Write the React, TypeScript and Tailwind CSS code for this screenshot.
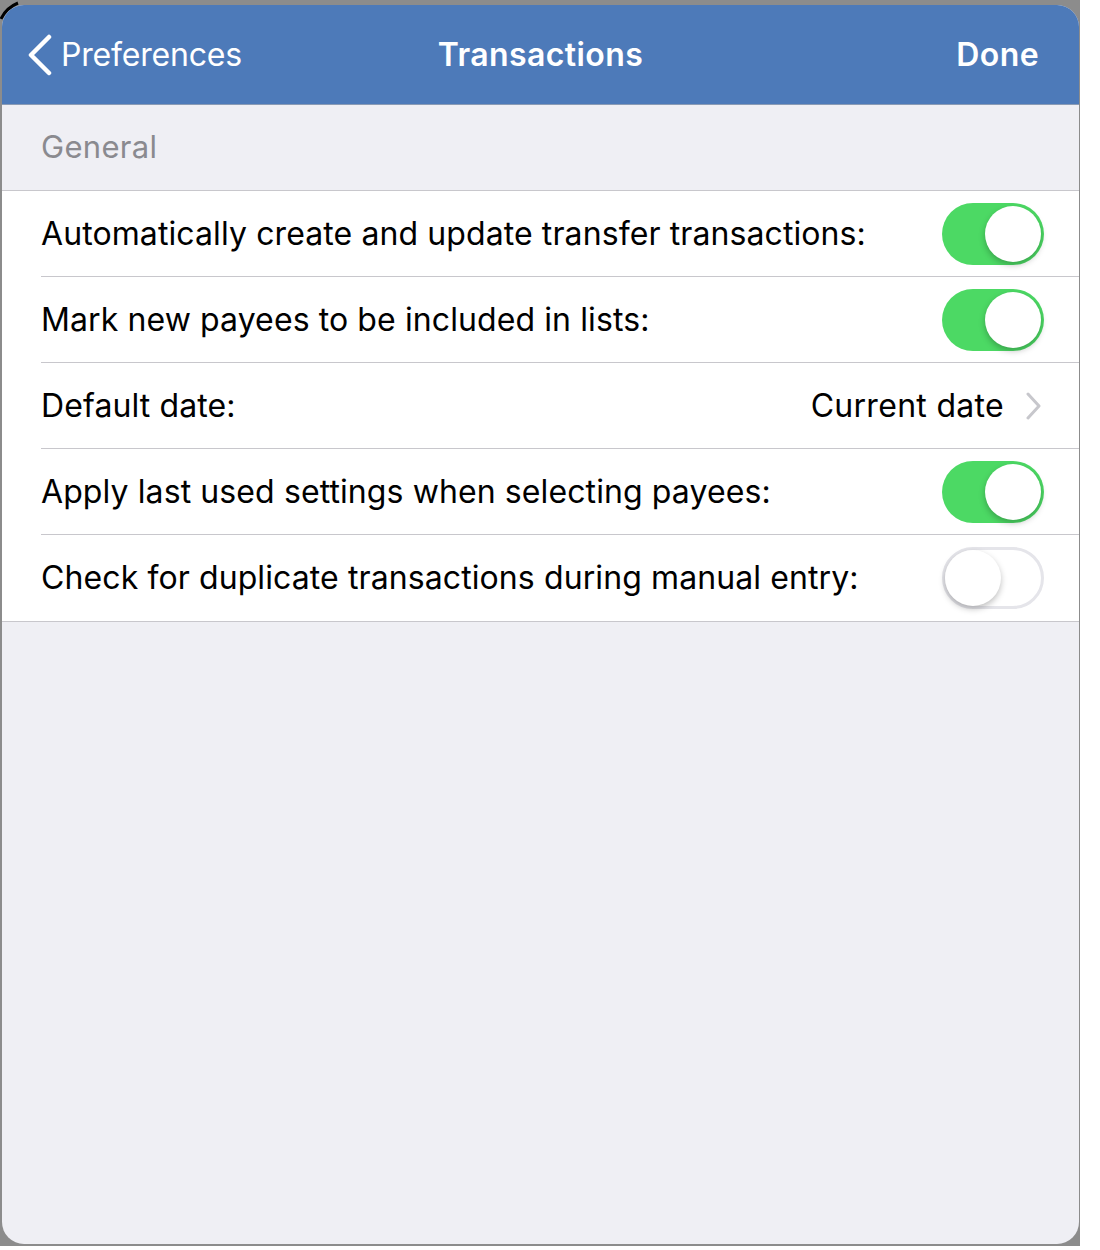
type Row =
  | { kind: "toggle"; label: string; on: boolean }
  | { kind: "link"; label: string; value: string }

const rows: Row[] = [
  { kind: "toggle", label: "Automatically create and update transfer transactions:", on: true },
  { kind: "toggle", label: "Mark new payees to be included in lists:", on: true },
  { kind: "link", label: "Default date:", value: "Current date" },
  { kind: "toggle", label: "Apply last used settings when selecting payees:", on: true },
  { kind: "toggle", label: "Check for duplicate transactions during manual entry:", on: false },
]

function Toggle({ on }: { on: boolean }) {
  return (
    <div
      className={`relative w-[102px] h-[62px] rounded-full ${
        on ? "bg-[#4cd964]" : "bg-white border-[3px] border-[#e5e5ea]"
      }`}
    >
      <div
        className={`absolute w-[56px] h-[56px] rounded-full bg-white shadow-[0_3px_6px_rgba(0,0,0,0.25)] ${
          on ? "top-[3px] right-[3px]" : "top-[0px] left-[0px]"
        }`}
      />
    </div>
  )
}

export default function App() {
  return (
    <div
      className="w-[1080px] h-[1246px] bg-[#8c8c8c] pt-[5px] pl-[2px] pr-[1px] pb-[2px] relative"
      style={{ fontFamily: "Inter, 'Liberation Sans', sans-serif" }}
    >
      <svg className="absolute left-0 top-0" width="24" height="24" viewBox="0 0 24 24">
        <path d="M1 19 Q6 8 18 3" stroke="#000" strokeWidth="3" fill="none" />
      </svg>
      <div className="h-full rounded-[22px] overflow-hidden bg-[#efeff4] flex flex-col">
        {/* nav bar */}
        <header className="h-[100px] bg-[#4d7ab9] border-b border-[#8a9bb5] flex items-center pl-[25px] text-white relative">
          <div className="flex items-center gap-[8px]">
            <svg width="26" height="42" viewBox="0 0 26 42">
              <polyline
                points="22,3 4,21 22,39"
                stroke="#fff"
                strokeWidth="4.5"
                strokeLinecap="round"
                strokeLinejoin="round"
                fill="none"
              />
            </svg>
            <span className="text-[32px] tracking-[-0.2px]">Preferences</span>
          </div>
          <span className="absolute left-0 right-0 text-center text-[32px] font-semibold tracking-[0.4px] pointer-events-none">
            Transactions
          </span>
          <span className="ml-auto mr-[40px] text-[32px] font-semibold tracking-[0.4px]">Done</span>
        </header>

        <div className="h-[85px] flex items-center px-[39px] text-[31px] tracking-[0.3px] text-[#8a8a8f]">
          General
        </div>

        <div className="bg-white border-y border-[#c8c7cc]">
          {rows.map((row, i) => (
            <div key={i} className="pl-[39px]">
              <div
                className={`h-[86px] flex items-center pr-[35px] ${
                  i < rows.length - 1 ? "border-b border-[#c8c7cc]" : ""
                }`}
              >
                <span className="text-[32px] text-black tracking-[0.1px]">{row.label}</span>
                <div className="ml-auto flex items-center">
                  {row.kind === "toggle" ? (
                    <Toggle on={row.on} />
                  ) : (
                    <div className="flex items-center gap-[22px] mr-[3px]">
                      <span className="text-[32px] text-black tracking-[0.3px]">{row.value}</span>
                      <svg width="15" height="28" viewBox="0 0 15 28">
                        <polyline
                          points="2,2 13,14 2,26"
                          stroke="#c7c7cc"
                          strokeWidth="3"
                          strokeLinecap="round"
                          strokeLinejoin="round"
                          fill="none"
                        />
                      </svg>
                    </div>
                  )}
                </div>
              </div>
            </div>
          ))}
        </div>
      </div>
    </div>
  )
}
